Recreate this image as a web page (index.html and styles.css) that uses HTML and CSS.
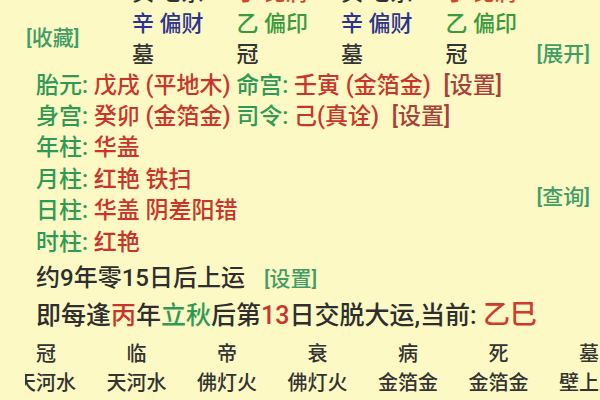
FILE: index.html
```html
<!DOCTYPE html>
<html lang="zh-CN">
<head>
<meta charset="utf-8">
<link rel="stylesheet" href="styles.css">
</head>
<body>
<div class="page">
  <div class="pillars">
    <span></span>
    <span class="dark">癸 七杀</span>
    <span class="orange">丁 比肩</span>
    <span class="dark">癸 七杀</span>
    <span class="orange">丁 比肩</span>
    <span></span>

    <span class="link collect">[收藏]</span>
    <span class="blue">辛 偏财</span>
    <span class="green">乙 偏印</span>
    <span class="blue">辛 偏财</span>
    <span class="green">乙 偏印</span>
    <span></span>

    <span class="dark">墓</span>
    <span class="dark">冠</span>
    <span class="dark">墓</span>
    <span class="dark">冠</span>
    <span class="link expand">[展开]</span>
  </div>

  <div class="info">
    <div class="line"><span class="lbl">胎元:</span> <span class="val">戊戌 (平地木)</span> <span class="lbl">命宫:</span> <span class="val">壬寅 (金箔金)</span> <span class="set">[设置]</span></div>
    <div class="line"><span class="lbl">身宫:</span> <span class="val">癸卯 (金箔金)</span> <span class="lbl">司令:</span> <span class="val">己(真诠)</span> <span class="set">[设置]</span></div>
    <div class="shensha">
      <div class="lines">
        <div class="line"><span class="lbl">年柱:</span> <span class="val">华盖</span></div>
        <div class="line"><span class="lbl">月柱:</span> <span class="val">红艳 铁扫</span></div>
        <div class="line"><span class="lbl">日柱:</span> <span class="val">华盖 阴差阳错</span></div>
        <div class="line"><span class="lbl">时柱:</span> <span class="val">红艳</span></div>
      </div>
      <span class="link query">[查询]</span>
    </div>
  </div>

  <div class="yun">
    <div class="start">约9年零15日后上运<span class="link setg">[设置]</span></div>
    <div class="jiao">即每逢<span class="val">丙</span>年<span class="grn">立秋</span>后第<span class="val">13</span>日交脱大运,当前: <span class="cur">乙巳</span></div>
  </div>

  <div class="dayun">
    <div class="dayun-grid">
      <span>冠</span><span>临</span><span>帝</span><span>衰</span><span>病</span><span>死</span><span>墓</span>
      <span>天河水</span><span>天河水</span><span>佛灯火</span><span>佛灯火</span><span>金箔金</span><span>金箔金</span><span>壁上土</span>
    </div>
  </div>
</div>
</body>
</html>
```
FILE: styles.css
```css
html, body {
  margin: 0;
  padding: 0;
  background: #fcf9c4;
}
body {
  width: 600px;
  height: 400px;
  overflow: hidden;
  font-family: Roboto, "Noto Sans CJK SC", sans-serif;
  font-weight: 500;
  color: #2e2e2e;
}
.page {
  width: 600px;
}
.pillars {
  display: grid;
  grid-template-columns: 132px repeat(3, 104.5px) 80px 1fr;
  grid-auto-rows: 31px;
  align-items: center;
  margin-top: -23.5px;
  font-size: 22px;
  line-height: 31px;
  white-space: nowrap;
}
.dark { color: #333; }
.orange { color: #d2492a; }
.blue { color: #2b348e; }
.green { color: #3a9a40; }
.link {
  color: #3f9d66;
  font-size: 21px;
  white-space: nowrap;
}
.collect {
  grid-row: span 2;
  align-self: center;
  padding-left: 26px;
}
.expand {
  justify-self: end;
  margin-right: 10px;
}
.info {
  padding-left: 36px;
  font-size: 23px;
}
.line {
  line-height: 31.4px;
  white-space: nowrap;
}
.lbl { color: #2f9a55; }
.val { color: #c9352b; }
.set {
  color: #a8403a;
  margin-left: 7px;
}
.shensha {
  display: flex;
  align-items: center;
  justify-content: space-between;
  padding-right: 10px;
}
.yun {
  padding-left: 36px;
  margin-top: 2px;
  white-space: nowrap;
}
.start {
  font-size: 24px;
  line-height: 36px;
}
.setg {
  margin-left: 19px;
}
.jiao {
  font-size: 25px;
  line-height: 36px;
}
.grn { color: #2f9a55; }
.cur {
  color: #d0392c;
  font-size: 27px;
}
.dayun {
  margin-left: 25px;
  margin-top: 6px;
  overflow: hidden;
}
.dayun-grid {
  display: grid;
  grid-template-columns: repeat(7, 90.5px);
  grid-auto-rows: 29px;
  align-items: center;
  margin-left: -24.25px;
  font-size: 20px;
  line-height: 29px;
  text-align: center;
  white-space: nowrap;
  color: #333;
}
```
